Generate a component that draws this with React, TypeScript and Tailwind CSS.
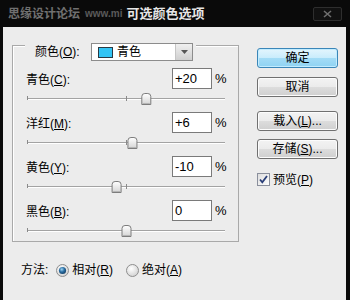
import React from 'react'

const font = "font-['Liberation_Sans','Noto_Sans_CJK_SC',sans-serif]"

const rows = [
  { label: '青色', key: 'C', text: '+20', value: 20 },
  { label: '洋红', key: 'M', text: '+6', value: 6 },
  { label: '黄色', key: 'Y', text: '-10', value: -10 },
  { label: '黑色', key: 'B', text: '0', value: 0 },
]

function Slider({ value }: { value: number }) {
  const cx = 100.5 + value * 0.99
  const x0 = cx - 4.5
  const x1 = cx + 4.5
  return (
    <svg width="202" height="23" className="block">
      <defs>
        <linearGradient id={`thumb${value}`} x1="0" y1="0" x2="0" y2="1">
          <stop offset="0" stopColor="#ffffff" />
          <stop offset="1" stopColor="#d4d4d4" />
        </linearGradient>
      </defs>
      <line x1="1" y1="9.5" x2="199" y2="9.5" stroke="#a3a3a3" />
      <line x1="1" y1="10.5" x2="199" y2="10.5" stroke="#ffffff" />
      <line x1="1.5" y1="7" x2="1.5" y2="11" stroke="#8a8a8a" />
      <line x1="100.5" y1="7" x2="100.5" y2="12" stroke="#8a8a8a" />
      <path
        d={`M${x0} 15.5 L${x0} 7.5 Q${x0} 4.5 ${x0 + 3} 4.5 L${x1 - 3} 4.5 Q${x1} 4.5 ${x1} 7.5 L${x1} 15.5 Z`}
        fill={`url(#thumb${value})`}
        stroke="#7d7d7d"
      />
      <line x1={x0 + 1} y1="14.5" x2={x1 - 1} y2="14.5" stroke="#b5b5b5" />
    </svg>
  )
}

function Radio({ checked }: { checked: boolean }) {
  return (
    <svg width="13" height="13" className="block">
      <defs>
        <radialGradient id="rbg" cx="0.4" cy="0.35" r="0.7">
          <stop offset="0" stopColor="#ffffff" />
          <stop offset="1" stopColor="#d0d0d0" />
        </radialGradient>
        <radialGradient id="rdot" cx="0.4" cy="0.35" r="0.7">
          <stop offset="0" stopColor="#9fd6f5" />
          <stop offset="0.5" stopColor="#2a6ea3" />
          <stop offset="1" stopColor="#133e63" />
        </radialGradient>
      </defs>
      <circle cx="6.5" cy="6.5" r="6" fill="url(#rbg)" stroke="#8e8e8e" />
      {checked && <circle cx="6.5" cy="6.5" r="3.6" fill="url(#rdot)" />}
    </svg>
  )
}

function Button({ children, primary }: { children: React.ReactNode; primary?: boolean }) {
  return (
    <div
      className={`w-[81px] h-[20px] rounded-[3px] border flex items-center justify-center text-[12px] text-black leading-none ${
        primary
          ? 'border-[#3a86b8] bg-[linear-gradient(to_bottom,#e3f5fd_0%,#c9ecfc_50%,#a4dcf6_50%,#8fd3f3_100%)] shadow-[inset_0_0_0_1px_#c2ecff]'
          : 'border-[#707070] bg-[linear-gradient(to_bottom,#f3f3f3_0%,#ebebeb_50%,#dddddd_50%,#cfcfcf_100%)] shadow-[inset_0_0_0_1px_#fcfcfc]'
      }`}
    >
      {children}
    </div>
  )
}

export default function App() {
  return (
    <div className={`w-[350px] h-[300px] bg-[#0a0a0a] flex flex-col overflow-hidden ${font}`}>
      {/* title bar */}
      <div className="h-[27px] flex items-center shrink-0">
        <span className="ml-[8px] text-[12px] font-bold text-[#707070] leading-none">思缘设计论坛</span>
        <span className="ml-[5px] whitespace-nowrap text-[10px] font-bold text-[#5a5a5a] leading-none">www.mi</span>
        <span className="ml-[4px] text-[13px] font-bold text-[#e6e6e6] leading-none">可选颜色选项</span>
        <div className="ml-auto mr-[8px] w-[29px] h-[14px] border border-[#2e2e2e] rounded-[2px] bg-[#111] flex items-center justify-center">
          <svg width="9" height="8">
            <path d="M1 1 L8 7 M8 1 L1 7" stroke="#6f6f6f" strokeWidth="1.6" />
          </svg>
        </div>
      </div>

      {/* body */}
      <div className="flex-1 ml-[3px] mr-[4px] bg-[#ececec] flex text-black">
        <div className="pl-[9px] w-[236px]">
          <div className="mt-[18px] w-[227px] h-[197px] border border-[#a9a9a9] shadow-[inset_1px_1px_0_#fff]">
            {/* legend */}
            <div className="-mt-[3px] ml-[12px] w-fit bg-[#ececec] pl-[10px] pr-[3px] flex items-center h-[18px]">
              <span className="w-[56px] text-[12px] leading-none">
                颜色(<u>O</u>):
              </span>
              <div className="w-[102px] h-[18px] border border-[#8c8c8c] bg-white flex items-center">
                <div className="ml-[6px] w-[15px] h-[11px] bg-[#33c4f4] border border-[#2a3a44]" />
                <span className="ml-[4px] text-[12px] leading-none">青色</span>
                <div className="ml-auto w-[17px] h-full border-l border-[#c5c5c5] bg-[linear-gradient(to_bottom,#f0f0f0,#cfcfcf)] flex items-center justify-center">
                  <svg width="7" height="4">
                    <path d="M0 0 L7 0 L3.5 4 Z" fill="#555" />
                  </svg>
                </div>
              </div>
            </div>

            <div className="mt-[7px]">
              {rows.map((r) => (
                <div key={r.key}>
                  <div className="flex items-center h-[21px] pl-[13px]">
                    <span className="w-[146px] text-[12px] leading-none pt-[2px]">
                      {r.label}(<u>{r.key}</u>):
                    </span>
                    <div className="w-[40px] h-[21px] border border-[#7a7a7a] bg-white flex items-center pl-[2px] text-[13px] leading-none">
                      {r.text}
                    </div>
                    <span className="ml-[3px] text-[13px] leading-none">%</span>
                  </div>
                  <div className="h-[23px] pl-[13px]">
                    <Slider value={r.value} />
                  </div>
                </div>
              ))}
            </div>
          </div>

          {/* method */}
          <div className="mt-[20px] pl-[9px] flex items-center h-[16px] text-[12px] leading-none">
            <span>方法:</span>
            <span className="ml-[8px]">
              <Radio checked />
            </span>
            <span className="ml-[3px]">
              相对(<u>R</u>)
            </span>
            <span className="ml-[13px]">
              <Radio checked={false} />
            </span>
            <span className="ml-[3px]">
              绝对(<u>A</u>)
            </span>
          </div>
        </div>

        {/* buttons */}
        <div className="ml-[18px] pt-[21px] flex flex-col">
          <Button primary>确定</Button>
          <div className="mt-[9px]">
            <Button>取消</Button>
          </div>
          <div className="mt-[14px]">
            <Button>
              载入(<u>L</u>)...
            </Button>
          </div>
          <div className="mt-[8px]">
            <Button>
              存储(<u>S</u>)...
            </Button>
          </div>
          <div className="mt-[14px] flex items-center">
            <svg width="13" height="13" className="block">
              <defs>
                <linearGradient id="cb" x1="0" y1="0" x2="1" y2="1">
                  <stop offset="0" stopColor="#dcdcdc" />
                  <stop offset="1" stopColor="#ffffff" />
                </linearGradient>
              </defs>
              <rect x="0.5" y="0.5" width="12" height="12" fill="url(#cb)" stroke="#8a8f9c" />
              <path d="M3 6.5 L5.3 9.3 L10 3" stroke="#2a3f78" strokeWidth="1.8" fill="none" />
            </svg>
            <span className="ml-[3px] text-[12px] leading-none">
              预览(<u>P</u>)
            </span>
          </div>
        </div>
      </div>
    </div>
  )
}
